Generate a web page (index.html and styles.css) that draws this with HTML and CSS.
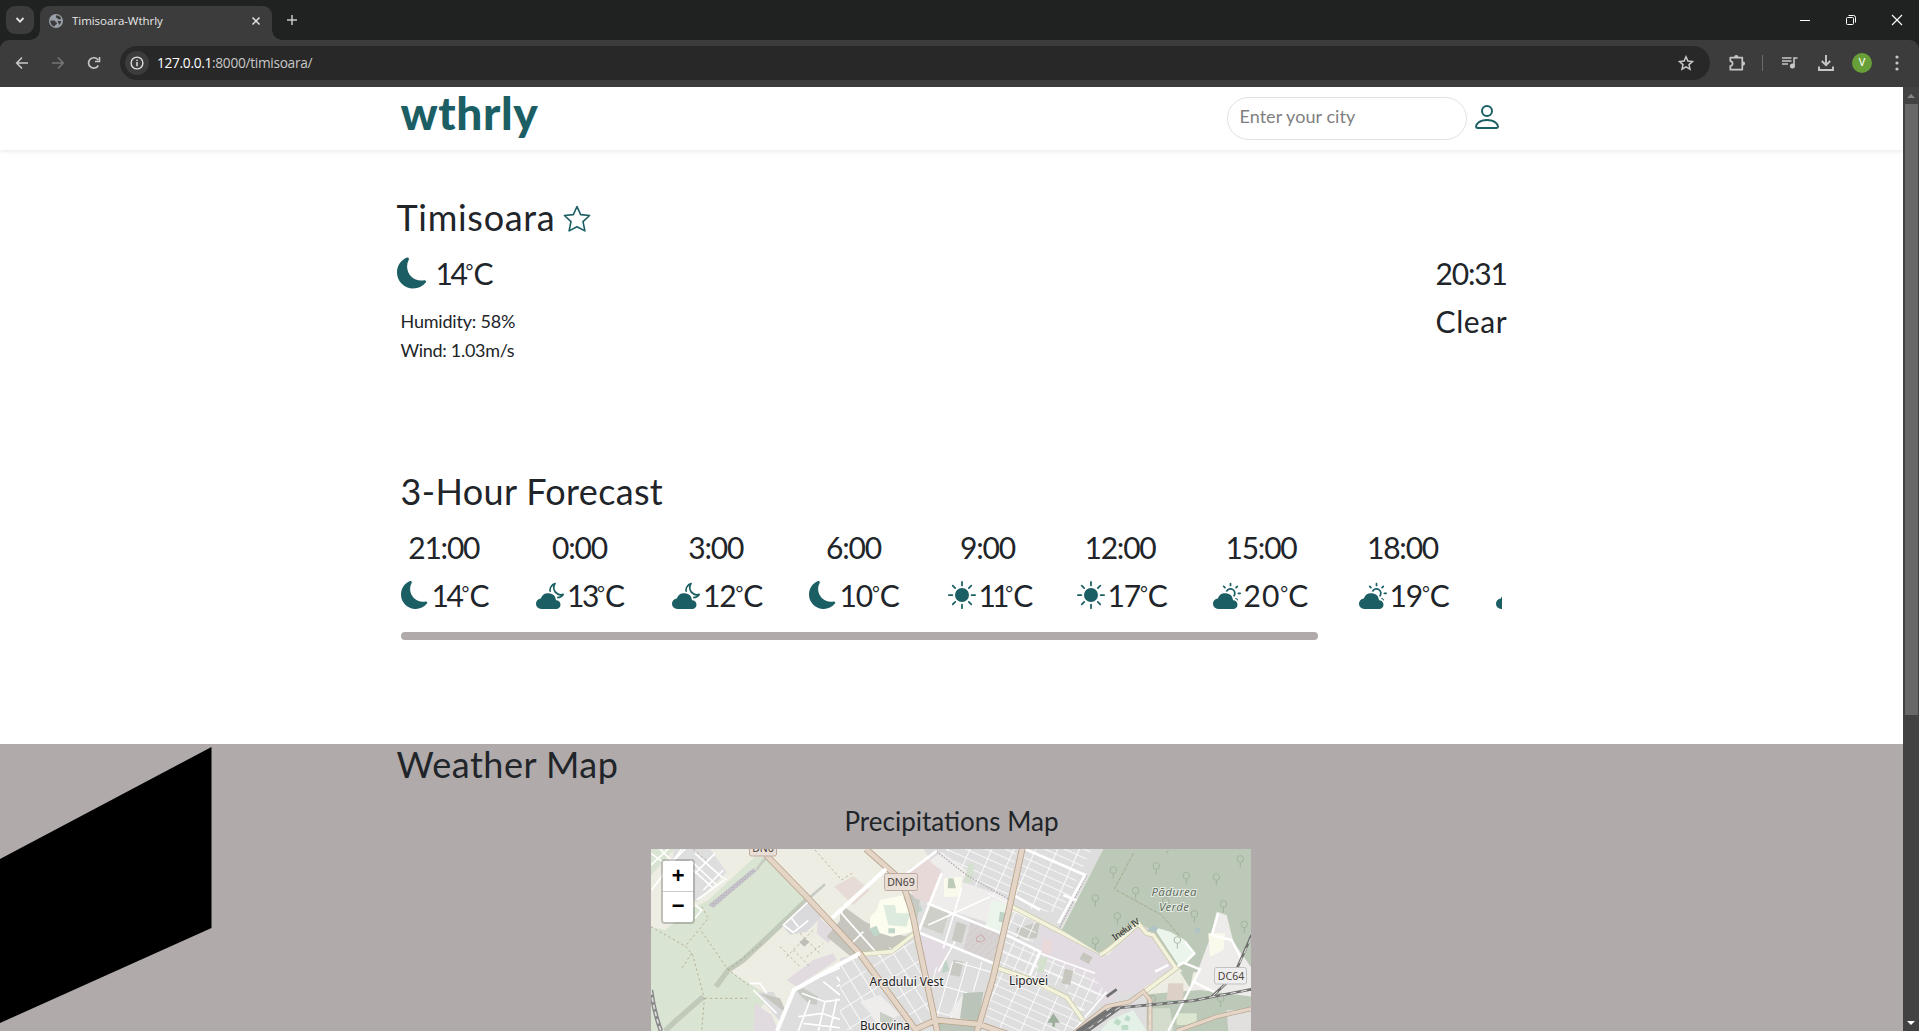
FILE: index.html
```html
<!DOCTYPE html>
<html lang="en">
<head>
<meta charset="utf-8">
<title>Timisoara-Wthrly</title>
<link rel="stylesheet" href="styles.css">
</head>
<body>
<svg class="defs" width="0" height="0">
  <symbol id="moon" viewBox="0 0 16 16"><path d="M6 .278a.768.768 0 0 1 .08.858 7.208 7.208 0 0 0-.878 3.46c0 4.021 3.278 7.277 7.318 7.277.527 0 1.04-.055 1.533-.16a.787.787 0 0 1 .81.316.733.733 0 0 1-.031.893A8.349 8.349 0 0 1 8.344 16C3.734 16 0 12.286 0 7.71 0 4.266 2.114 1.312 5.124.06A.752.752 0 0 1 6 .278z"/></symbol>
  <symbol id="sun" viewBox="0 0 16 16"><path d="M8 12a4 4 0 1 0 0-8 4 4 0 0 0 0 8zM8 0a.5.5 0 0 1 .5.5v2a.5.5 0 0 1-1 0v-2A.5.5 0 0 1 8 0zm0 13a.5.5 0 0 1 .5.5v2a.5.5 0 0 1-1 0v-2A.5.5 0 0 1 8 13zm8-5a.5.5 0 0 1-.5.5h-2a.5.5 0 0 1 0-1h2a.5.5 0 0 1 .5.5zM3 8a.5.5 0 0 1-.5.5h-2a.5.5 0 0 1 0-1h2A.5.5 0 0 1 3 8zm10.657-5.657a.5.5 0 0 1 0 .707l-1.414 1.415a.5.5 0 1 1-.707-.708l1.414-1.414a.5.5 0 0 1 .707 0zm-9.193 9.193a.5.5 0 0 1 0 .707L3.05 13.657a.5.5 0 0 1-.707-.707l1.414-1.414a.5.5 0 0 1 .707 0zm9.193 2.121a.5.5 0 0 1-.707 0l-1.414-1.414a.5.5 0 0 1 .707-.707l1.414 1.414a.5.5 0 0 1 0 .707zM4.464 4.465a.5.5 0 0 1-.707 0L2.343 3.05a.5.5 0 1 1 .707-.707l1.414 1.414a.5.5 0 0 1 0 .708z"/></symbol>
  <symbol id="cloud-moon" viewBox="0 0 16 16"><path d="M11.473 11a4.5 4.5 0 0 0-8.72-.99A3 3 0 0 0 3 16h8.5a2.5 2.5 0 0 0 0-5h-.027z"/><path d="M11.286 1.778a.5.5 0 0 0-.565-.755 4.595 4.595 0 0 0-3.18 5.003 5.46 5.46 0 0 1 1.055.209A3.603 3.603 0 0 1 9.83 2.617a4.593 4.593 0 0 0 4.31 5.744 3.576 3.576 0 0 1-2.241.634c.162.317.295.652.394 1a4.59 4.59 0 0 0 3.624-2.04.5.5 0 0 0-.565-.755 3.593 3.593 0 0 1-4.065-5.422z"/></symbol>
  <symbol id="cloud-sun" viewBox="0 0 16 16"><path d="M11.473 11a4.5 4.5 0 0 0-8.72-.99A3 3 0 0 0 3 16h8.5a2.5 2.5 0 0 0 0-5h-.027z"/><path d="M10.5 1.5a.5.5 0 0 0-1 0v1a.5.5 0 0 0 1 0v-1zm3.743 1.964a.5.5 0 1 0-.707-.707l-.708.707a.5.5 0 0 0 .708.708l.707-.708zm-7.779-.707a.5.5 0 0 0-.707.707l.707.708a.5.5 0 1 0 .708-.708l-.708-.707zm1.734 3.374a2 2 0 1 1 3.296 2.198c.199.281.372.582.516.898a3 3 0 1 0-4.84-3.225c.352.011.696.055 1.028.129zm4.484 4.074c.6.215 1.125.59 1.522 1.072a.5.5 0 0 0 .039-.742l-.707-.707a.5.5 0 0 0-.854.377zM14.5 6.5a.5.5 0 0 0 0 1h1a.5.5 0 0 0 0-1h-1z"/></symbol>
</svg>

<div class="tabstrip">
  <button class="tab-search"><svg width="12" height="12" viewBox="0 0 12 12"><path d="M2.5 4l3.5 3.6L9.500 4" fill="none" stroke="#e3e3e3" stroke-width="1.8"/></svg></button>
  <div class="tab">
    <svg class="globe" width="14" height="14" viewBox="0 0 14 14"><circle cx="7" cy="7" r="7" fill="#9aa0a9"/><path d="M1.300 6.500h4.200q1 .2 1 1.500 1.500 0 1.500 1.800l-1.800 1.500q-.4 1.500-1.700 1Q1.500 11 1.300 6.500zM7.500 1.200q3.500.3 4.700 3.300-1.400 1.600-3 .8-.4-1.600-2-1.600-1-.8.300-2.500zM8.500 7h3.500q.5 2.500-1.800 4-.6-2.200-1.700-4z" fill="#3c3c3c"/></svg>
    <span class="tab-title">Timisoara-Wthrly</span>
    <svg width="10" height="10" viewBox="0 0 10 10"><path d="M1.500 1.500l7 7m0-7l-7 7" stroke="#e3e3e3" stroke-width="1.5"/></svg>
  </div>
  <svg class="plus" width="12" height="12" viewBox="0 0 12 12"><path d="M6 1v10M1 6h10" stroke="#c7c7c7" stroke-width="1.500"/></svg>
  <div class="window-controls">
    <svg width="12" height="12" viewBox="0 0 12 12"><path d="M1 6.500h10" stroke="#fff"/></svg>
    <svg width="12" height="12" viewBox="0 0 12 12" fill="none" stroke="#fff"><rect x="1.500" y="3.500" width="7" height="7" rx="1"/><path d="M3.500 1.500h5q2 0 2 2v5"/></svg>
    <svg width="12" height="12" viewBox="0 0 12 12"><path d="M1 1l10 10M11 1L1 11" stroke="#fff" stroke-width="1.100"/></svg>
  </div>
</div>

<div class="toolbar">
  <div class="nav-buttons">
    <svg width="14" height="14" viewBox="0 0 14 14" fill="none" stroke="#c7c7c7" stroke-width="1.600"><path d="M13 7H2M7 1.500L1.700 7 7 12.500"/></svg>
    <svg width="14" height="14" viewBox="0 0 14 14" fill="none" stroke="#757575" stroke-width="1.600"><path d="M1 7h11M7 1.500L12.300 7 7 12.500"/></svg>
    <svg width="14" height="14" viewBox="0 0 14 14" fill="none" stroke="#c7c7c7" stroke-width="1.600"><path d="M11.300 9.500a5.200 5.200 0 1 1-.2-5.500M12.500 1v4.500H8"/></svg>
  </div>
  <div class="address">
    <span class="info"><svg width="14" height="14" viewBox="0 0 14 14"><circle cx="7" cy="7" r="5.900" fill="none" stroke="#dedede" stroke-width="1.400"/><path d="M7 6v4.200M7 3.700v1.400" stroke="#dedede" stroke-width="1.500"/></svg></span>
    <span class="url"><b>127.0.0.1</b>:8000/timisoara/</span>
    <svg width="16" height="16" viewBox="0 0 16 16" fill="none" stroke="#c7c7c7" stroke-width="1.500"><path d="M8 1.800l1.900 4.300 4.600.4-3.500 3.100 1 4.600L8 11.800l-4 2.400 1-4.600L1.500 6.500l4.600-.4z"/></svg>
  </div>
  <div class="actions">
    <svg width="18" height="18" viewBox="0 0 18 18"><path d="M2.300 3.600h12v12h-12v-3.500q2.300-.3 2.300-2.500T2.300 7.100z" fill="none" stroke="#c7c7c7" stroke-width="1.700" stroke-linejoin="round"/><path d="M6.200 3a2.100 2.100 0 0 1 4.200 0zM15 7.500a2.100 2.100 0 0 1 0 4.200z" fill="#c7c7c7"/></svg>
    <span class="divider"></span>
    <svg width="16" height="14" viewBox="0 0 16 14"><path d="M0 2h9.500M0 5h9.500M0 8h6" stroke="#c7c7c7" stroke-width="1.500"/><path d="M12 10V2h3.500" fill="none" stroke="#c7c7c7" stroke-width="1.600"/><circle cx="10.400" cy="10" r="2.500" fill="#c7c7c7"/></svg>
    <svg class="download" width="18" height="18" viewBox="0 0 18 18" fill="none" stroke="#c7c7c7" stroke-width="1.900"><path d="M9 1v10M4.800 7L9 11.200 13.200 7M2 12.500V16h14v-3.500"/></svg>
    <span class="avatar">V</span>
    <svg class="dots" width="4" height="16" viewBox="0 0 4 16" fill="#c7c7c7"><circle cx="2" cy="2" r="1.600"/><circle cx="2" cy="8" r="1.600"/><circle cx="2" cy="14" r="1.600"/></svg>
  </div>
</div>

<div class="viewport">
  <div class="page">
    <header class="site-header">
      <div class="container header-row">
        <div class="logo">wthrly</div>
        <div class="header-right">
          <input class="search" type="text" placeholder="Enter your city">
          <svg class="person" width="32" height="32" viewBox="0 0 16 16" fill="none" stroke="#1b5e63"><circle cx="8" cy="5" r="2.500"/><path d="M3.200 13.500h9.600q.7 0 .7-.7c0-1.100-1.500-3.300-5.500-3.300s-5.500 2.200-5.500 3.300q0 .7.700.7z"/></svg>
        </div>
      </div>
    </header>

    <section class="container current">
      <h1 class="title city">Timisoara <svg class="fav" width="28" height="28" viewBox="0 0 28 28" fill="none" stroke="#1b5e63" stroke-width="1.600" stroke-linejoin="round"><path d="M14 1.600l3.700 8 8.900.9-6.600 6.100 1.900 9.300L14 21.700l-7.900 4.200L8 16.600l-6.600-6.100 8.900-.9z"/></svg></h1>
      <div class="current-row">
        <div>
          <div class="big now"><svg class="icon" width="31" height="32"><use href="#moon"/></svg><span class="tight">14<i class="deg">°</i>C</span></div>
          <div class="detail hum">Humidity: 58%</div>
          <div class="detail wind">Wind: 1.03m/s</div>
        </div>
        <div class="right">
          <div class="big clock">20:31</div>
          <div class="big cond">Clear</div>
        </div>
      </div>
    </section>

    <section class="container forecast">
      <h2 class="title">3-Hour Forecast</h2>
      <div class="strip">
        <div class="slot"><div class="big">21:00</div><div class="big temp"><svg class="icon"><use href="#moon"/></svg><span class="tight">14<i class="deg">°</i>C</span></div></div>
        <div class="slot"><div class="big">0:00</div><div class="big temp"><svg class="icon"><use href="#cloud-moon"/></svg><span class="tight">13<i class="deg">°</i>C</span></div></div>
        <div class="slot"><div class="big">3:00</div><div class="big temp"><svg class="icon"><use href="#cloud-moon"/></svg><span>12<i class="deg">°</i>C</span></div></div>
        <div class="slot"><div class="big">6:00</div><div class="big temp"><svg class="icon"><use href="#moon"/></svg><span>10<i class="deg">°</i>C</span></div></div>
        <div class="slot"><div class="big">9:00</div><div class="big temp"><svg class="icon"><use href="#sun"/></svg><span class="narrow">11<i class="deg">°</i>C</span></div></div>
        <div class="slot"><div class="big">12:00</div><div class="big temp"><svg class="icon"><use href="#sun"/></svg><span>17<i class="deg">°</i>C</span></div></div>
        <div class="slot"><div class="big">15:00</div><div class="big temp"><svg class="icon"><use href="#cloud-sun"/></svg><span class="wide">20<i class="deg">°</i>C</span></div></div>
        <div class="slot"><div class="big">18:00</div><div class="big temp"><svg class="icon"><use href="#cloud-sun"/></svg><span>19<i class="deg">°</i>C</span></div></div>
        <div class="slot"><div class="big">&nbsp;</div><div class="big temp"><svg class="icon"><use href="#cloud-moon"/></svg></div></div>
      </div>
      <div class="thumb"></div>
    </section>

    <section class="map-section">
      <svg class="shape" width="212" height="280" viewBox="0 0 212 280"><path d="M211.500 3v181L0 279V115z"/></svg>
      <div class="container">
        <h2 class="title wm">Weather Map</h2>
        <h3 class="map-title">Precipitations Map</h3>
        <div class="map">
          <svg width="600" height="182" viewBox="651 849 600 182">
            <defs>
              <pattern id="g1" width="33" height="62" patternUnits="userSpaceOnUse" patternTransform="rotate(24)"><path d="M0 0h33M0 31h33M0 0v62" stroke="#fff" stroke-width="5" fill="none"/></pattern>
              <pattern id="g2" width="60" height="24" patternUnits="userSpaceOnUse" patternTransform="rotate(24)"><path d="M0 0h60M0 0v24" stroke="#fff" stroke-width="5" fill="none"/></pattern>
              <pattern id="g3" width="38" height="60" patternUnits="userSpaceOnUse" patternTransform="rotate(-32)"><path d="M0 0h38M0 0v60" stroke="#fff" stroke-width="5" fill="none"/></pattern>
              <pattern id="g4" width="42" height="80" patternUnits="userSpaceOnUse" patternTransform="rotate(16)"><path d="M0 0h42M0 0v80" stroke="#fff" stroke-width="6" fill="none"/></pattern>
              <pattern id="dots" width="8" height="8" patternUnits="userSpaceOnUse"><rect width="8" height="8" fill="#c6c3cb"/><rect x="2" y="2" width="3" height="3" fill="#a7a3ae"/></pattern>
              <pattern id="hatch" width="16" height="16" patternUnits="userSpaceOnUse" patternTransform="rotate(45)"><rect width="16" height="16" fill="#d8d3d3"/><path d="M0 0v16" stroke="#c5bcbc" stroke-width="2"/></pattern>
              <g id="tree" fill="none" stroke="#9eae99" stroke-width="2.500"><circle r="10"/><path d="M0 10v16"/></g>
            </defs>
            <rect x="651" y="849" width="600" height="182" fill="#eeede4"/>

            <!-- west side: fields, park, strip and lower housing -->
            <g transform="translate(640 790) scale(.33333)">
              <path d="M100 177h110l50 70-90 90-70-60z" fill="#dedede"/>
              <path d="M33 177h70l-70 80zM75 420l90-70 40-20 140-130 40 0 120 125-125 125-115 90 125 80-50 60 40 43H33V412z" fill="#dae4d2"/>
              <path d="M505 325L385 440 310 510 265 540 228 590M190 620L110 690 75 723" stroke="#c0c9ba" stroke-width="16" fill="none"/>
              <path d="M205 345l135-110 10 8-130 110z" fill="url(#dots)"/>
              <path d="M350 240q20-35 40-40M490 340l65-57" stroke="#c6cbc3" stroke-width="8" fill="none"/>
              <path d="M640 258l50 42-50 45-58-55z" fill="#e6dcd5"/>
              <path d="M505 335l45 40-50 50-50 10-25-30zM350 610l50-5 40 70-20 20z" fill="#dad9dc"/>
              <path d="M535 380l50 45-20 35-35-30zM440 570l80-60 60-20 10 20-120 80zM345 640l50 35 20 48h-75z" fill="#e1dbe0"/>
              <path d="M605 345l70 50 100 45-10 25-60-15-60 60-85-70 50-60zM360 610l60 15 20 45z" fill="#c6c6bf"/>
              <path d="M465 600l195-105 60-40 110-25 130 50v243H405z" fill="#dfdedf"/>
              <path d="M470 600l20-5 45 25-5 25-25-5-30-30zM790 320l30-5 40 25-20 70-30-60z" fill="#c7cbc4"/>
              <path d="M835 425l90 35-15 95-50-5-20-80z" fill="#e2dce2"/>
              <path d="M850 177h110v300l-130-50 70-180z" fill="#dedede"/>
              <g stroke="#fff" fill="none" stroke-width="5">
                <path d="M33 225L85 177M33 190l55 40M60 177l75 75M125 177L35 300M75 240l60-63M165 190l85 75M150 210l80 75M160 240l60 55M225 190l-60 60M250 240l-60 60M170 330l90-65M165 345l20 15-20 25"/>
                <path d="M430 405L505 335M430 405l30 22 45-35M455 385l20 25M330 580l30 0 20 30M340 600l70 70"/>
                <path d="M485 610l70 25 75-10 60 70M510 630l-35 93M555 635l-20 88M590 625l-20 98M620 650l40 73M490 700l190 23M475 680l70-10 90 30M590 560l60 80M550 575l50 40M540 560l90-40M610 540l70 110M650 530l80 120M590 590l80-50M615 610l90-55M645 640l80-60M680 670l80-60"/>
              </g>
              <path d="M33 410l105 60 20 25 35 130-8 98M185 350l20 35-70 85M155 490l-30 45M185 425l80 115 60 45M195 625h130M525 180l80 90 30-20M160 177l40 35M265 540l100-80M440 500l80-80M460 480l50 50M420 470l60 60M480 430l60 60M500 500l50-40" stroke="#a79c80" stroke-width="2.200" stroke-dasharray="7 8" fill="none"/>
              <path d="M478 457l15-13 15 13-15 13z" fill="#bfbfb8"/>
              <path d="M33 600q10 70 30 123" stroke="#888" stroke-width="13" fill="none"/><path d="M33 600q10 70 30 123" stroke="#ddd" stroke-width="5" stroke-dasharray="14 8" fill="none"/>
            </g>

            <!-- city centre -->
            <g transform="translate(840 845) scale(.33333)">
              <path d="M290 12h500L665 250 800 330 1000 558H0V340l60-15 160-65 20-180z" fill="#dfdedf"/>
              <path d="M0 200l80 40 120 35-30 40-110 15-60-60z" fill="#c6c6bf"/>
              <path d="M120 165l75-15 15 30 5 80-60 15-65-20 0-40 20-20z" fill="#fcfcef"/>
              <path d="M130 180l35 0 5 25 40 0-10 40-55-5z" fill="#dcebdd"/>
              <path d="M90 250l20-8 10 25-18 10zM145 250l20 0 0 15-20 0zM230 185l12-3 5 15-12 4z" fill="#bfd6c9"/>
              <path d="M190 155l20-10 30 20-10 70-20-30z" fill="#c7cbc4"/>
              <path d="M265 175l40-100-40-25 40-30 80 60-20 30 145 50-15 90z" fill="#efedec"/>
              <path d="M268 178l60 20-20 70-65-25z" fill="#cfcfca"/>
              <path d="M210 70l50-30 45 40-40 95-40-15-35-60z" fill="#e8d9d9"/>
              <path d="M312 100l55-5-5 60-50 0z" fill="#fafaec"/><path d="M325 100l15 0 8 30-25 0z" fill="#bdcbb9"/>
              <path d="M455 165l45 12-15 85-48-20z" fill="#ebf5ec"/><path d="M480 200l15 3-4 30-15-3zM300 350l20-3 8 30-25 8z" fill="#bdd3c6"/>
              <path d="M395 220l85 45-20 90-90-40z" fill="url(#hatch)"/><path d="M410 278l15-10 10 15-10 8-15-2z" stroke="#cba8aa" fill="none" stroke-width="3"/>
              <path d="M350 230l30 10-15 55-30-10zM340 345l30 5-10 45-30-5zM530 250l70-20-10 50-60 0z" fill="#c9c9c3"/>
              <path d="M235 265l90 35-20 85-50 5z" fill="#e2dce2"/>
              <path d="M605 240l65 10 120 80 40 130-40 20-55-90-140-60z" fill="#e2dce2"/>
              <path d="M315 12h215l-30 170-120-75z" fill="url(#g2)"/><path d="M555 12h200L665 200l-80 0-60-50z" fill="url(#g2)"/>
              <path d="M510 190l90 30-20 70-80-20z" fill="url(#g1)"/>
              <path d="M498 280l100 40 150 60 50 60-80 70-40-80-210-60z" fill="url(#g1)"/>
              <path d="M470 375l120 35 90 55 50 65-30 28H430z" fill="url(#g2)"/>
              <path d="M255 380l80-30 125 0-25 100-50-15-60 123h-40z" fill="url(#g4)"/>
              <path d="M70 335l150-55 60 240-60 30z" fill="url(#g3)"/>
              <path d="M0 360l50-25 140 220H0z" fill="url(#g3)"/>
              <path d="M60 470l60-20 60 60-60 30z" fill="#efedec"/><path d="M120 500l40 20-10 20-30-10z" fill="#c9cec6"/>
              <path d="M610 280l30 10-10 40-25-5z" fill="#ead9da"/>
              <path d="M730 322l28 15-12 20-28-15zM675 370l25 8-10 42-25-5z" fill="#c6c6bf"/>
              <path d="M385 60l20-10-10 60-25 5zM600 335l25 0-15 50-20-5z" fill="#d5e0cf"/>
              <path d="M325 510l50-70-15 90z" fill="#efedec"/>
              <path d="M370 445l60-5-15 90-55-10zM290 535h125l0 23H300z" fill="#bac4b8"/>
              <path d="M290 20L380 90 510 165M655 255L740 90" stroke="#b6aeb3" stroke-width="4" stroke-dasharray="5 4" fill="none"/>
              <path d="M0 200L135 72M200 85L290 18M262 175L510 275 600 320 570 390M235 262L460 355M305 85L235 262M555 12L735 90 655 235M520 150L600 195M670 150l60 25M0 355l60-25" stroke="#fff" stroke-width="8" fill="none"/>
              <path d="M600 325L765 385M0 200L120 335M30 300l40-40M265 240l185-85M800 440L700 558M365 130l-55 180M345 290l-50 90" stroke="#fff" stroke-width="5" fill="none"/>
              <g fill="none"><path d="M60 328l95-8 70-55M510 182L785 325q15 0 50-60M470 368l100 35 110 54 50 70" stroke="#c8c6a4" stroke-width="15"/><path d="M60 328l95-8 70-55M510 182L785 325q15 0 50-60M470 368l100 35 110 54 50 70" stroke="#f3f2dc" stroke-width="11"/></g>
              <path d="M640 505l-18 28h15v12h8v-12h15z" fill="#9eb09c"/>
            </g>

            <!-- eastern forest, ring road and railway -->
            <g transform="translate(950 790) scale(.33333)">
              <path d="M460 177h460v370H700L560 400 455 495 335 420z" fill="#bdc9b8"/>
              <path d="M565 400l40 20 70 110-110 75-80 10-30-100z" fill="#e2dce2"/>
              <path d="M610 410l50 15 45 25 30 45-50 30z" fill="#ecf5ec"/>
              <path d="M800 365l30 10 20 80 55 80v100L720 600l30-75 30-80z" fill="#eeecea"/>
              <path d="M775 430l50 0-5 50-40 20z" fill="#fafaec"/><path d="M750 600l155 20v103H590v-110zM690 545l40 0-10 50z" fill="#bdc9b8"/><path d="M680 670h60v35h-60z" fill="#dbe6d0"/><path d="M600 655h60l10 68h-80z" fill="#d3dccd"/>
              <path d="M655 580h45v50h-50z" fill="#ddd1c7"/><path d="M480 690l70-30 40 63H450z" fill="#e4f1e7"/><path d="M830 660l75 0v63h-70z" fill="#e2e0df"/>
              <path d="M500 685l15 10-10 12-15-8zM530 675l12 8-6 12-14-6zM515 705l20 0 0 15-20 0z" fill="#bcdcc8"/>
              <path d="M590 420l20-12 15 5-10 18zM735 415l15 0 0 12-14 2z" fill="#b0c3c6"/>
              <path d="M550 190L493 297 635 375 690 440M655 180l-8 12" stroke="#a3a285" stroke-width="2.500" stroke-dasharray="12 4" fill="none"/>
              <use href="#tree" x="490" y="240"/><use href="#tree" x="619" y="228"/><use href="#tree" x="709" y="257"/><use href="#tree" x="799" y="261"/><use href="#tree" x="871" y="207"/><use href="#tree" x="557" y="302"/><use href="#tree" x="436" y="324"/><use href="#tree" x="502" y="378"/><use href="#tree" x="436" y="453"/><use href="#tree" x="648" y="333"/><use href="#tree" x="820" y="342"/><use href="#tree" x="733" y="372"/><use href="#tree" x="883" y="403"/><use href="#tree" x="682" y="450"/><use href="#tree" x="812" y="625"/><use href="#tree" x="607" y="627"/>
              <path d="M680 530l20-12 50 20L655 723M730 575l70 35M705 455l28 35-30 30M805 370l-20 65 60 15 30 60M615 545l40-20" stroke="#fff" stroke-width="7" fill="none"/>
              <path d="M450 493q15 0 115-93l25 30 20 5 68 100-100 75" stroke="#c8c6a4" stroke-width="15" fill="none"/><path d="M450 493q15 0 115-93l25 30 20 5 68 100-100 75" stroke="#f3f2dc" stroke-width="11" fill="none"/>
              <path d="M370 730L470 650 540 635 580 605 600 630v100M680 723L800 680 910 655" stroke="#b8a58e" stroke-width="14" fill="none"/><path d="M370 730L470 650 540 635 580 605 600 630v100M680 723L800 680 910 655" stroke="#e4d5c6" stroke-width="10" fill="none"/>
              <path d="M370 740L490 655 730 632 800 618 905 598M785 620L850 560 905 435M470 620l30-22" stroke="#707070" stroke-width="8" fill="none"/>
              <path d="M390 738L510 652M380 725l90-62" stroke="#747474" stroke-width="11" fill="none"/>
              <path d="M390 735L505 654 730 632 800 618 905 598M790 617L850 560 905 440M600 640v80" stroke="#e8e8e8" stroke-width="3" stroke-dasharray="18 14" fill="none"/>
            </g>

            <!-- trunk roads -->
            <g fill="none">
              <path d="M766 855L806 896 860 954 918 1033M866 849L901 880Q912 905 918 941L938 1035M1023 845L1010 905 993 978 976 1035M914 1030L936 1020 978 1024 1010 1035" stroke="#b8a58e" stroke-width="6.500"/>
              <path d="M766 855L806 896 860 954 918 1033M866 849L901 880Q912 905 918 941L938 1035M1023 845L1010 905 993 978 976 1035M914 1030L936 1020 978 1024 1010 1035" stroke="#e4d5c6" stroke-width="4.800"/>
              <path d="M777 1031L794 990 860 953M832 918L886 869" stroke="#fff" stroke-width="4"/>
            </g>
            <g class="shield"><rect x="749.500" y="834" width="27" height="22" rx="2"/><text x="763" y="852">DN6</text><rect x="884.500" y="873.500" width="33" height="17" rx="2"/><text x="901" y="886">DN69</text></g>
            <g class="shield gray"><rect x="1214.500" y="967.500" width="32" height="16.500" rx="2"/><text x="1231" y="980">DC64</text></g>
            <g class="place"><text x="869.500" y="985.500" textLength="74">Aradului Vest</text><text x="860" y="1030" textLength="50">Bucovina</text><text x="1009" y="984.500" textLength="39">Lipovei</text></g>
            <g class="forest"><text x="1174" y="896" textLength="45">Pădurea</text><text x="1174" y="910.500" textLength="30">Verde</text></g>
            <text class="road" x="1112" y="938" transform="rotate(-35 1112 938)" textLength="31" dy="4" dx="1">Inelui IV</text>
          </svg>
          <div class="zoom-control"><span>+</span><span>−</span></div>
        </div>
      </div>
    </section>
  </div>
  <div class="scrollbar"><i class="up"></i><i class="bar"></i><i class="down"></i></div>
</div>
</body>
</html>
```
FILE: styles.css
```css
* { box-sizing: border-box; }
body { margin: 0; width: 1919px; height: 1031px; overflow: hidden; display: flex; flex-direction: column; background: #202221; font-family: Lato, sans-serif; color: #212529; }
svg { display: block; flex: none; }
.defs { position: absolute; }
h1, h2, h3 { margin: 0; font-weight: 400; }

.tabstrip { height: 40px; display: flex; align-items: center; background: #202221; font-family: "Open Sans", sans-serif; flex: none; }
.tab-search { width: 28px; height: 28px; margin-left: 6px; padding: 0; border: 0; border-radius: 9px; background: #3c3c3c; display: flex; align-items: center; justify-content: center; }
.tab { position: relative; width: 232px; height: 34px; margin: 6px 0 0 6px; padding: 0 11px 5px 9px; border-radius: 9px 9px 0 0; background: #3c3c3c; display: flex; align-items: center; }
.tab::before, .tab::after { content: ""; position: absolute; bottom: 0; width: 10px; height: 10px; }
.tab::before { left: -10px; background: radial-gradient(circle at 0 0, transparent 9.500px, #3c3c3c 10px); }
.tab::after { right: -10px; background: radial-gradient(circle at 100% 0, transparent 9.500px, #3c3c3c 10px); }
.tab-title { flex: 1; margin-left: 9px; font-size: 11.500px; letter-spacing: -.05px; color: #e8e8e8; }
.plus { margin-left: 14px; }
.window-controls { margin-left: auto; margin-right: 16px; display: flex; gap: 34px; }

.toolbar { height: 47px; background: #3c3c3c; border-radius: 9px 9px 0 0; display: flex; align-items: center; flex: none; padding: 0 20px 1px 15px; }
.nav-buttons { display: flex; gap: 22px; width: 105px; }
.address { width: 1590px; height: 34px; border-radius: 17px; background: #282828; display: flex; align-items: center; padding: 0 16px 0 5px; }
.info { width: 24px; height: 24px; border-radius: 12px; background: #3c3c3c; display: flex; align-items: center; justify-content: center; }
.url { flex: 1; margin-left: 8px; padding-bottom: 1px; font: 13.700px "Open Sans", sans-serif; letter-spacing: -.3px; color: #c7c7c7; }
.url b { font-weight: 400; color: #fff; }
.actions { display: flex; align-items: center; margin-left: 18px; flex: 1; }
.divider { width: 1px; height: 16px; background: #6b6b6b; margin: 0 19px 0 16px; }
.download { margin-left: 19px; }
.avatar { width: 20px; height: 20px; border-radius: 50%; background: #689f38; color: #fff; font: 11px/20px Roboto, sans-serif; text-align: center; margin-left: 17px; }
.dots { margin-left: auto; }

.viewport { flex: 1; display: flex; min-height: 0; }
.page { width: 1903px; background: #fff; overflow: hidden; }
.container { width: 1110px; margin: 0 auto; }
.site-header { height: 63px; box-shadow: 0 2px 4px rgba(0,0,0,.075); }
.header-row { display: flex; justify-content: space-between; height: 63px; }
.logo { margin-left: 4px; padding-top: 1px; font-size: 46px; font-weight: 900; line-height: 50px; color: #1b5e63; letter-spacing: .6px; }
.header-right { display: flex; gap: 4px; padding: 10px 4px 0 0; }
.search { width: 240px; height: 43px; border: 1px solid #dee2e6; border-radius: 22px; padding: 0 12px 6px; font: 18px Lato, sans-serif; letter-spacing: .05px; background: #fff; outline: 0; }
.search::placeholder { color: #7f7f7f; }
.person { margin-top: 4px; }

.current { padding-top: 43px; height: 317px; }
.title { height: 48px; line-height: 48px; font-size: 36px; display: flex; align-items: center; white-space: nowrap; letter-spacing: .35px; }
.city { letter-spacing: .7px; }
.fav { margin-left: 8px; margin-top: 3px; }
.current-row { display: flex; justify-content: space-between; margin-top: 8px; }
.big { height: 48px; line-height: 48px; font-size: 30px; letter-spacing: -1.200px; white-space: nowrap; }
.big.cond { letter-spacing: .6px; }
.icon { fill: #1b5e63; }
.now { display: flex; align-items: center; gap: 8px; }
.deg { font-style: normal; font-size: 19px; vertical-align: 7px; line-height: 0; letter-spacing: 0; }
.tight { letter-spacing: -2.400px; }
.narrow { letter-spacing: -4px; }
.wide { letter-spacing: 1px; }
.detail { height: 28.500px; line-height: 28.500px; font-size: 18px; letter-spacing: -.2px; margin-left: 4px; }
.wind { letter-spacing: -.3px; }
.hum { margin-top: 10px; }
.right { width: 71px; }

.forecast { height: 277px; }
.forecast .title { padding-left: 4px; }
.strip { display: grid; grid-template-columns: 135.500px 136px 136.500px 139px 129px 136px 146px 137px 60px; width: 1101px; margin: 8px 0 0 4px; overflow: hidden; }
.slot { padding-right: 49px; }
.slot .big:first-child { text-align: center; }
.temp { display: flex; align-items: center; gap: 3px; }
.temp .icon { width: 28px; height: 28px; }
.thumb { width: 917px; height: 8px; border-radius: 4px; background: #b0aaaa; margin: 13px 0 0 4px; }

.map-section { position: relative; height: 287px; background: #b0aaaa; overflow: hidden; }
.shape { position: absolute; left: 0; top: 0; }
.wm { height: 40px; line-height: 38px; letter-spacing: .5px; }
.map-title { height: 65px; padding-top: 17px; line-height: 40px; font-size: 26px; text-align: center; }
.map { position: relative; width: 600px; height: 182px; margin: 0 auto; left: -1px; overflow: hidden; }
.zoom-control { position: absolute; left: 10px; top: 10px; width: 34px; height: 65px; border: 2px solid rgba(0,0,0,.2); border-radius: 4px; background-clip: padding-box; }
.zoom-control span { display: block; height: 30px; background: #fff; color: #000; text-align: center; font: bold 22px/31px "Liberation Mono", monospace; text-indent: 1px; border-radius: 0 0 2px 2px; }
.zoom-control span:first-child { height: 31px; line-height: 33px; border-bottom: 1px solid #ccc; border-radius: 2px 2px 0 0; }
.shield rect { fill: #eadfd7; stroke: #bdaaa0; }
.shield text { font: 10.500px "Noto Sans", sans-serif; fill: #4b423d; text-anchor: middle; }
.shield.gray rect { fill: #eee; stroke: #c2c2c2; }
.place text { font: 12px "Noto Sans", sans-serif; fill: #222; stroke: rgba(255,255,255,.6); stroke-width: 2px; paint-order: stroke; }
.forest text { font: italic 11.500px "Noto Sans", sans-serif; fill: #5f7060; stroke: rgba(255,255,255,.6); stroke-width: 2px; paint-order: stroke; text-anchor: middle; }
.road { font: 9px "Noto Sans", sans-serif; fill: #222; }

.scrollbar { width: 16px; background: #424242; display: flex; flex-direction: column; align-items: center; }
.scrollbar .bar { width: 13px; height: 611px; background: #686868; margin-top: 6px; }
.up, .down { width: 0; height: 0; border: 4px solid transparent; border-top: 0; border-bottom-color: #858585; margin-top: 7px; }
.scrollbar .down { border-top: 4px solid #fff; border-bottom: 0; margin-top: auto; margin-bottom: 6px; }
```
